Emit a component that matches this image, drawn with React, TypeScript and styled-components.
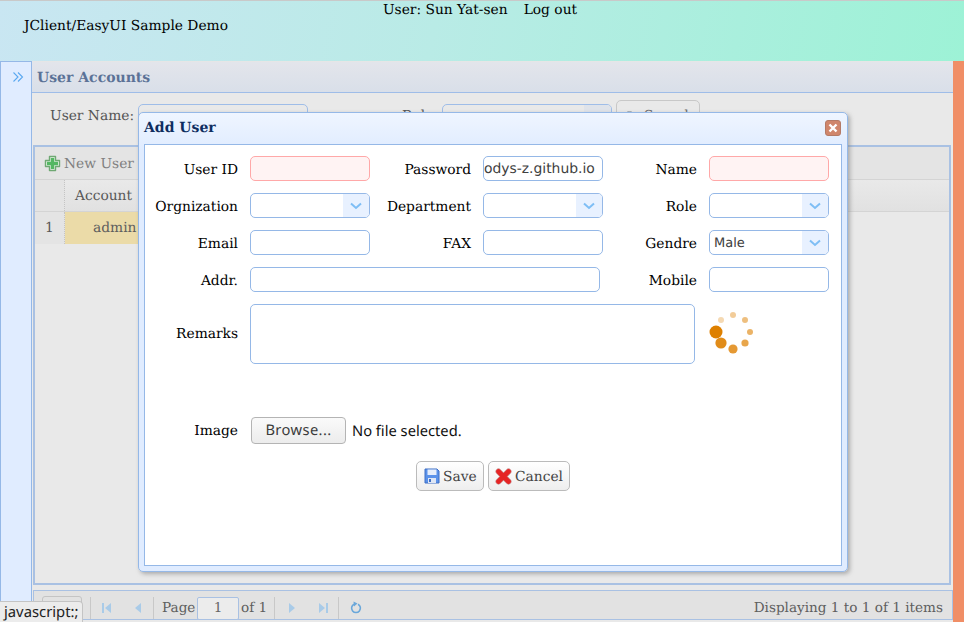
import React from 'react'
import styled, { createGlobalStyle } from 'styled-components'

const serif = '"DejaVu Serif", serif'
const sans = '"DejaVu Sans", sans-serif'
const ui = '"Noto Sans", sans-serif'

const GlobalStyle = createGlobalStyle`
  html, body {
    margin: 0;
    padding: 0;
    height: 100%;
    overflow: hidden;
    background: #e9e9e9;
    text-rendering: geometricPrecision;
  }
  #root {
    height: 100%;
  }
  * {
    box-sizing: border-box;
  }
`

const Page = styled.div`
  width: 964px;
  height: 622px;
  position: relative;
  display: flex;
  flex-direction: column;
  overflow: hidden;
  font-family: ${serif};
  font-size: 13.8px;
`

const Header = styled.header`
  height: 61px;
  flex: 0 0 auto;
  border-top: 1px solid #c9c9c9;
  background: linear-gradient(100deg, #c9e6f2 0%, #b9ebe6 45%, #9df2d6 100%);
  color: #000;
`

const UserBar = styled.div`
  line-height: 15px;
  padding: 2px 4px 0 0;
  display: flex;
  justify-content: center;
  gap: 16px;
`

const AppTitle = styled.div`
  padding-left: 24px;
  line-height: 16px;
`

const Body = styled.div`
  flex: 1 1 auto;
  min-height: 0;
  display: flex;
`

const WestRail = styled.aside`
  width: 32px;
  flex: 0 0 auto;
  background: #e0ecff;
  border: 1px solid #95b8e7;
  border-bottom: 0;
  display: flex;
  justify-content: center;
  padding: 9px 0 0 4px;
`

const Center = styled.main`
  flex: 1 1 auto;
  min-width: 0;
  display: flex;
  flex-direction: column;
  background: #e9e9e9;
`

const EastStrip = styled.div`
  width: 11px;
  flex: 0 0 auto;
  background: #f08e66;
`

const TitleBar = styled.div`
  height: 32px;
  flex: 0 0 auto;
  border-top: 1px solid #e6e6e6;
  border-bottom: 1px solid #9fbde8;
  background: linear-gradient(to bottom, #e3e5eb, #d9dfe9);
  color: #5b7297;
  font-weight: bold;
  font-size: 14px;
  line-height: 31px;
  padding: 1px 0 0 5px;
`

const SearchBar = styled.div`
  height: 52px;
  flex: 0 0 auto;
  display: flex;
  align-items: flex-start;
  padding: 11px 0 0 18px;
  color: #555;
`

const SearchLabel = styled.span<{ $width: number }>`
  width: ${p => p.$width}px;
  line-height: 24px;
  flex: 0 0 auto;
`

const SearchInput = styled.div<{ $gapAfter: number }>`
  width: 170px;
  height: 25px;
  flex: 0 0 auto;
  margin-right: ${p => p.$gapAfter}px;
  border: 1px solid #9fbde8;
  border-radius: 5px;
  background: #e9e9e9;
  display: flex;
  justify-content: flex-end;
  overflow: hidden;
`

const SearchArrow = styled.span`
  width: 27px;
  background: #dfe3ea;
`

const SearchButton = styled.div`
  width: 84px;
  height: 30px;
  margin-top: -4px;
  flex: 0 0 auto;
  border: 1px solid #c8c8c8;
  border-radius: 5px;
  display: flex;
  align-items: center;
  gap: 9px;
  padding: 2px 0 0 7px;
  color: #6a6a6a;
`

const SearchDot = styled.span`
  width: 11px;
  height: 11px;
  border: 1px solid #9aa4ad;
  border-radius: 50%;
  background: #d5dbe0;
`

const GridBox = styled.section`
  margin-left: 1px;
  margin-right: 2px;
  height: 440px;
  flex: 0 0 auto;
  border: 2px solid #a9c1e3;
  display: flex;
  flex-direction: column;
`

const GridToolbar = styled.div`
  height: 33px;
  flex: 0 0 auto;
  background: #e4e4e4;
  border-bottom: 1px solid #d4d4d4;
  color: #808080;
  display: flex;
  align-items: center;
  gap: 3px;
  padding-left: 9px;
`

const ToolbarText = styled.span`
  line-height: 24px;
  padding-top: 2px;
`

const GridHead = styled.div`
  height: 32px;
  flex: 0 0 auto;
  display: flex;
  background: linear-gradient(to bottom, #e9e9e9, #e1e1e1);
  border-bottom: 1px solid #d4d4d4;
  color: #585858;
`

const RowNumberCell = styled.div`
  width: 30px;
  flex: 0 0 auto;
  line-height: 33px;
  text-align: center;
  border-right: 1px dotted #c4c4c4;
  background: #e4e4e4;
  color: #585858;
`

const HeadCell = styled.div`
  width: 100px;
  line-height: 32px;
  padding-left: 10px;
`

const GridRow = styled.div`
  display: flex;
  height: 32px;
  flex: 0 0 auto;
`

const SelectedCell = styled.div`
  width: 100px;
  background: #ebdba8;
  color: #5e5e5e;
  line-height: 33px;
  padding-left: 28px;
`

const Pager = styled.footer`
  height: 30px;
  margin: 5px 0 0 1px;
  flex: 0 0 auto;
  border: 1px solid #a9c1e3;
  background: #e2e2e2;
  display: flex;
  align-items: center;
  color: #5e5e5e;
  font-size: 13.6px;
  padding: 6px 9px 0 8px;
`

const PageSize = styled.div`
  width: 40px;
  height: 24px;
  border: 1px solid #c4c4c4;
  border-radius: 3px;
  margin-right: 8px;
`

const PagerSep = styled.div`
  width: 1px;
  height: 22px;
  background: #c8c8c8;
`

const PagerIcon = styled.div<{ $width: number }>`
  width: ${p => p.$width}px;
  display: flex;
  justify-content: center;
`

const PageNumber = styled.div`
  width: 42px;
  height: 23px;
  margin: 0 2px 0 1px;
  border: 1px solid #a9c1e3;
  border-radius: 2px;
  text-align: center;
  line-height: 21px;
  color: #666;
  background: #ececec;
`

const PageLabel = styled.span`
  width: 34px;
  margin-left: 8px;
  flex: 0 0 auto;
`

const PageCount = styled.span`
  width: 33px;
  flex: 0 0 auto;
`

const PagerInfo = styled.span`
  margin-left: auto;
`

const Window = styled.div`
  position: absolute;
  left: 138px;
  top: 112px;
  width: 710px;
  height: 460px;
  background: linear-gradient(to bottom, #eff5ff, #e0ecff 8%);
  border: 1px solid #95b8e7;
  border-radius: 5px;
  padding: 0 5px 5px 5px;
  display: flex;
  flex-direction: column;
  box-shadow: 2px 2px 4px rgba(120, 120, 120, 0.55);
`

const WindowTitle = styled.div`
  height: 31px;
  flex: 0 0 auto;
  display: flex;
  align-items: center;
  justify-content: space-between;
  font-weight: bold;
  font-size: 14px;
  color: #0e2d5f;
  padding-bottom: 2px;
`

const CloseButton = styled.div`
  width: 16px;
  height: 16px;
  display: flex;
  border-radius: 3px;
  background: #d0866c;
  border: 1px solid #b47a66;
  margin-right: 1px;
  align-items: center;
  justify-content: center;
`

const WindowBody = styled.div`
  flex: 1 1 auto;
  min-height: 0;
  background: #fff;
  border: 1px solid #95b8e7;
  padding-top: 11px;
`

const FormGrid = styled.div`
  display: grid;
  grid-template-columns: 105px 120px 113px 120px 106px 120px;
  grid-auto-rows: 25px;
  row-gap: 12px;
`

const Label = styled.label`
  text-align: right;
  padding-right: 12px;
  line-height: 29px;
  color: #000;
`

const TextBox = styled.div<{ $required?: boolean; $span?: number }>`
  height: 25px;
  border: 1px solid ${p => (p.$required ? '#ffa8a8' : '#95b8e7')};
  border-radius: 5px;
  background: ${p => (p.$required ? '#fff3f3' : '#fff')};
  font-family: ${sans};
  font-size: 13.9px;
  line-height: 24px;
  color: #404040;
  overflow: hidden;
  white-space: nowrap;
  ${p => (p.$span ? `grid-column: span ${p.$span}; width: 350px;` : '')}
`

const Combo = styled.div`
  height: 25px;
  border: 1px solid #95b8e7;
  border-radius: 5px;
  background: #fff;
  display: flex;
  overflow: hidden;
  font-family: ${sans};
  font-size: 13px;
  line-height: 25px;
  color: #404040;
`

const ComboValue = styled.span`
  flex: 1 1 auto;
  padding-left: 4px;
`

const ComboArrow = styled.span`
  width: 26px;
  flex: 0 0 auto;
  background: #e8f1ff;
  display: flex;
  align-items: center;
  justify-content: center;
`

const RemarksRow = styled.div`
  display: flex;
  align-items: flex-start;
  height: 60px;
  margin-top: 12px;
`

const RowLabel = styled(Label)<{ $height: number }>`
  width: 105px;
  flex: 0 0 auto;
  line-height: ${p => p.$height}px;
`

const Remarks = styled.div`
  width: 445px;
  height: 60px;
  flex: 0 0 auto;
  border: 1px solid #95b8e7;
  border-radius: 5px;
`

const Spinner = styled.svg`
  margin: 8px 0 0 12px;
  flex: 0 0 auto;
`

const ImageRow = styled.div`
  display: flex;
  align-items: center;
  margin-top: 53px;
  height: 27px;
`

const BrowseButton = styled.div`
  width: 95px;
  height: 27px;
  margin-left: 1px;
  border: 1px solid #b4b4b4;
  border-radius: 4px;
  background: linear-gradient(to bottom, #fafafa, #ececec);
  font-family: ${ui};
  font-size: 14.7px;
  line-height: 25px;
  letter-spacing: 0.4px;
  text-align: center;
  color: #3c3c3c;
`

const FileName = styled.span`
  margin-left: 6px;
  font-family: ${ui};
  font-size: 14.7px;
  color: #111;
`

const Actions = styled.div`
  display: flex;
  justify-content: center;
  gap: 4px;
  margin-top: 17px;
`

const ActionButton = styled.div<{ $width: number; $pad: number }>`
  width: ${p => p.$width}px;
  height: 30px;
  display: flex;
  align-items: center;
  gap: 3px;
  padding-left: ${p => p.$pad}px;
  border: 1px solid #bbb;
  border-radius: 5px;
  background: linear-gradient(to bottom, #ffffff, #eeeeee);
  color: #444;
`

const ActionText = styled.span`
  padding-top: 2px;
`

const StatusTip = styled.div`
  position: absolute;
  left: 0;
  bottom: 0;
  width: 83px;
  height: 21px;
  background: #ececec;
  border: 1px solid #c4c4c4;
  border-left: 0;
  border-bottom: 0;
  border-top-right-radius: 4px;
  font-family: ${ui};
  font-size: 14.8px;
  line-height: 21px;
  padding-left: 4px;
  color: #222;
`

const Chevron = () => (
  <svg width="14" height="8" viewBox="0 0 14 8" fill="none">
    <path d="M2 1.5 L7 6 L12 1.5" stroke="#7ebef5" strokeWidth="2" />
  </svg>
)

const ComboBox = ({ value }: { value?: string }) => (
  <Combo>
    <ComboValue>{value}</ComboValue>
    <ComboArrow>
      <Chevron />
    </ComboArrow>
  </Combo>
)

const PagerGlyph = ({ d }: { d: string }) => (
  <svg width="14" height="14" viewBox="0 0 14 14">
    <path d={d} fill="#a9cbe8" />
  </svg>
)

const dots = [
  { x: 14, y: 8, r: 3, o: 0.3 },
  { x: 26, y: 3, r: 3, o: 0.4 },
  { x: 38, y: 8, r: 3, o: 0.5 },
  { x: 43, y: 20, r: 3, o: 0.6 },
  { x: 38, y: 31, r: 3.6, o: 0.7 },
  { x: 26, y: 37, r: 4.6, o: 0.8 },
  { x: 14, y: 31, r: 5.6, o: 0.9 },
  { x: 9, y: 20, r: 6.5, o: 1 },
]

const App: React.FC = () => (
  <Page>
    <GlobalStyle />
    <Header>
      <UserBar>
        <span>User: Sun Yat-sen</span>
        <span>Log out</span>
      </UserBar>
      <AppTitle>JClient/EasyUI Sample Demo</AppTitle>
    </Header>
    <Body>
      <WestRail>
        <svg width="12" height="12" viewBox="0 0 12 12" fill="none" stroke="#5aa8f0" strokeWidth="1.1">
          <path d="M1.5 1.5 L6 6 L1.5 10.5 M6 1.5 L10.5 6 L6 10.5" />
        </svg>
      </WestRail>
      <Center>
        <TitleBar>User Accounts</TitleBar>
        <SearchBar>
          <SearchLabel $width={88}>User Name:</SearchLabel>
          <SearchInput $gapAfter={94} />
          <SearchLabel $width={40}>Role</SearchLabel>
          <SearchInput $gapAfter={4}>
            <SearchArrow />
          </SearchInput>
          <SearchButton>
            <SearchDot />
            <span>Search</span>
          </SearchButton>
        </SearchBar>
        <GridBox>
          <GridToolbar>
            <svg width="17" height="17" viewBox="0 0 17 17">
              <path
                d="M5.5 1.5 h6 v4 h4 v6 h-4 v4 h-6 v-4 h-4 v-6 h4 z"
                fill="#e8f3e8"
                stroke="#6fa873"
                strokeWidth="1.4"
                strokeLinejoin="round"
              />
              <path d="M6.8 3 h3.4 v3.8 h3.8 v3.4 h-3.8 v3.8 h-3.4 v-3.8 h-3.8 v-3.4 h3.8 z" fill="#54b763" />
            </svg>
            <ToolbarText>New User</ToolbarText>
          </GridToolbar>
          <GridHead>
            <RowNumberCell />
            <HeadCell>Account</HeadCell>
          </GridHead>
          <GridRow>
            <RowNumberCell>1</RowNumberCell>
            <SelectedCell>admin</SelectedCell>
          </GridRow>
        </GridBox>
        <Pager>
          <PageSize />
          <PagerSep />
          <PagerIcon $width={31}>
            <PagerGlyph d="M2 2 h2 v10 h-2 z M11 2 v10 l-6 -5 z" />
          </PagerIcon>
          <PagerIcon $width={31}>
            <PagerGlyph d="M10 2 v10 l-6 -5 z" />
          </PagerIcon>
          <PagerSep />
          <PageLabel>Page</PageLabel>
          <PageNumber>1</PageNumber>
          <PageCount>of 1</PageCount>
          <PagerSep />
          <PagerIcon $width={33}>
            <PagerGlyph d="M4 2 v10 l6 -5 z" />
          </PagerIcon>
          <PagerIcon $width={30}>
            <PagerGlyph d="M3 2 v10 l6 -5 z M10 2 h2 v10 h-2 z" />
          </PagerIcon>
          <PagerSep />
          <PagerIcon $width={34}>
            <svg width="14" height="14" viewBox="0 0 14 14" fill="none">
              <path d="M5 3.2 A4.4 4.4 0 1 0 9 3.2" stroke="#6aa7da" strokeWidth="1.6" />
              <path d="M4.5 0.5 L8.5 2.5 L5 5.5 z" fill="#6aa7da" />
            </svg>
          </PagerIcon>
          <PagerInfo>Displaying 1 to 1 of 1 items</PagerInfo>
        </Pager>
      </Center>
      <EastStrip />
    </Body>

    <Window>
      <WindowTitle>
        <span>Add User</span>
        <CloseButton>
          <svg width="10" height="10" viewBox="0 0 10 10" stroke="#fff" strokeWidth="2.4">
            <path d="M1.5 1.5 L8.5 8.5 M8.5 1.5 L1.5 8.5" />
          </svg>
        </CloseButton>
      </WindowTitle>
      <WindowBody>
        <FormGrid>
          <Label>User ID</Label>
          <TextBox $required />
          <Label>Password</Label>
          <TextBox>odys-z.github.io</TextBox>
          <Label>Name</Label>
          <TextBox $required />

          <Label>Orgnization</Label>
          <ComboBox />
          <Label>Department</Label>
          <ComboBox />
          <Label>Role</Label>
          <ComboBox />

          <Label>Email</Label>
          <TextBox />
          <Label>FAX</Label>
          <TextBox />
          <Label>Gendre</Label>
          <ComboBox value="Male" />

          <Label>Addr.</Label>
          <TextBox $span={3} />
          <Label>Mobile</Label>
          <TextBox />
        </FormGrid>
        <RemarksRow>
          <RowLabel $height={61}>Remarks</RowLabel>
          <Remarks />
          <Spinner width="50" height="44" viewBox="0 0 50 44">
            {dots.map(dot => (
              <circle key={dot.x * 100 + dot.y} cx={dot.x} cy={dot.y} r={dot.r} fill="#de8000" opacity={dot.o} />
            ))}
          </Spinner>
        </RemarksRow>
        <ImageRow>
          <RowLabel $height={28}>Image</RowLabel>
          <BrowseButton>Browse...</BrowseButton>
          <FileName>No file selected.</FileName>
        </ImageRow>
        <Actions>
          <ActionButton $width={68} $pad={7}>
            <svg width="16" height="16" viewBox="0 0 16 16">
              <path d="M1 1 h12 l2 2 v12 h-14 z" fill="#5b92ea" stroke="#3f6fc4" />
              <rect x="3.5" y="1.5" width="9" height="5.5" fill="#e6eefb" />
              <rect x="4" y="10" width="8" height="5" fill="#dfe7f5" />
              <rect x="5" y="11" width="2" height="3" fill="#3f6fc4" />
            </svg>
            <ActionText>Save</ActionText>
          </ActionButton>
          <ActionButton $width={82} $pad={6}>
            <svg width="17" height="17" viewBox="0 0 17 17" fill="none" strokeLinecap="round">
              <path d="M3.5 3.5 L13.5 13.5 M13.5 3.5 L3.5 13.5" stroke="#c98d8d" strokeWidth="6" />
              <path d="M3.5 3.5 L13.5 13.5 M13.5 3.5 L3.5 13.5" stroke="#e62424" strokeWidth="4.6" />
            </svg>
            <ActionText>Cancel</ActionText>
          </ActionButton>
        </Actions>
      </WindowBody>
    </Window>

    <StatusTip>javascript:;</StatusTip>
  </Page>
)

export default App
